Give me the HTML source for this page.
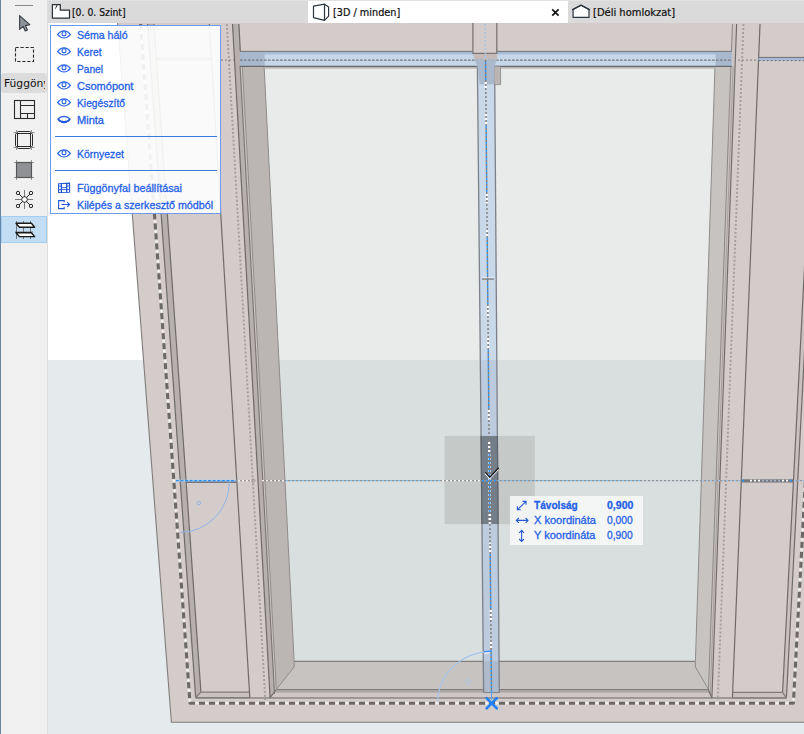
<!DOCTYPE html>
<html lang="hu"><head><meta charset="utf-8"><title>3D / minden</title>
<style>
html,body{margin:0;padding:0;}
body{width:804px;height:734px;overflow:hidden;position:relative;background:#fff;font-family:"Liberation Sans",sans-serif;}
#scene{position:absolute;left:0;top:0;}
#tabbar{position:absolute;left:48px;top:0;width:756px;height:23px;background:#dadada;}
#tabact{position:absolute;left:308px;top:0;width:260px;height:23px;background:#ffffff;}
#tool{position:absolute;left:0;top:0;width:48px;height:734px;background:#f0f0f0;box-sizing:border-box;border-left:1px solid #6787a4;border-right:1px solid #dddddd;}
#tool .lab{position:absolute;left:0.4px;top:73px;width:45.2px;height:20px;background:#dcdcdc;border-radius:3px;overflow:hidden;}
#tool .lab .t{left:2.3px;top:4.1px;font-size:10px;color:#111;transform:scaleX(1.07);-webkit-text-stroke:0;}
#tool .lab .c{position:absolute;left:0;top:0;width:43.9px;height:20px;overflow:hidden;}
#tool .sel{position:absolute;left:0px;top:216px;width:46px;height:27px;background:#c3ddf4;border:1px solid #a5cdf0;box-sizing:border-box;}
.t{position:absolute;white-space:nowrap;line-height:14px;height:14px;transform-origin:0 50%;}
.tb{font-family:"DejaVu Sans","Liberation Sans",sans-serif;-webkit-text-stroke:0.2px #000;}
.pt{-webkit-text-stroke:0.3px #2460e6;}
.ic{position:absolute;overflow:visible;}
#topline{position:absolute;left:1px;top:0;width:803px;height:1px;background:#e1e1e1;}
#pop{position:absolute;left:50px;top:25px;width:171px;height:189px;box-sizing:border-box;border:1px solid #6c9af0;background:rgba(255,255,255,0.905);}
#pop .sep{position:absolute;left:4px;width:162px;height:1px;background:#3b78e0;}
#trk{position:absolute;left:510px;top:496px;width:133px;height:49px;background:rgba(250,251,251,0.82);}
</style></head><body>
<svg id="scene" width="804" height="734" viewBox="0 0 804 734">
<rect x="48" y="23" width="756" height="337" fill="#ffffff"/>
<rect x="48" y="360" width="756" height="374" fill="#e5eaec"/>
<polygon points="117.6,23.0 805.0,23.0 805.0,722.3 171.4,722.3" fill="#d4ccca"/>
<polyline points="117.6,23.0 171.4,722.3 805.0,722.3" fill="none" stroke="#807c7b" stroke-width="1.1"/>
<polygon points="264.1,66.3 715.0,66.3 705.3,360.0 278.9,360.0" fill="#e9ebea"/>
<polygon points="278.9,360.0 705.3,360.0 695.4,661.3 294.1,661.3" fill="#d9dfde"/>
<polygon points="294.1,661.3 695.4,661.3 695.4,667.0 708.5,689.5 276.3,689.5 294.1,667.0" fill="#c7c3c1"/>
<line x1="294.1" y1="661.3" x2="695.4" y2="661.3" stroke="#807c7b" stroke-width="1.25"/>
<rect x="276.3" y="689.5" width="432.2" height="2.2" fill="#b9b4b2"/>
<rect x="272" y="691.7" width="439" height="6" fill="#cfc7c5"/>
<line x1="276.3" y1="689.5" x2="708.5" y2="689.5" stroke="#807c7b" stroke-width="1.25"/>
<line x1="274.5" y1="691.9" x2="710" y2="691.9" stroke="#9a9593" stroke-width="1"/>
<line x1="195.7" y1="697.9" x2="786.4" y2="697.9" stroke="#8d8887" stroke-width="1.5"/>
<polygon points="242.4,66.3 264.1,66.3 294.1,661.3 294.1,667.0 276.3,689.5" fill="#bbb6b4"/>
<polyline points="264.1,66.3 294.1,661.3 294.1,667.0 276.3,689.5" fill="none" stroke="#8f8c8b" stroke-width="1"/>
<polygon points="715.0,66.3 730.9,66.3 708.5,689.5 695.4,667.0 695.4,661.3" fill="#c7c3c1"/>
<polyline points="715.0,66.3 695.4,661.3 695.4,667.0 708.5,689.5" fill="none" stroke="#8f8c8b" stroke-width="1"/>
<polygon points="232.5,24.0 238.9,24.0 240.3,51.4 242.4,66.3 276.3,689.5 270.1,697.6" fill="#b6b0ae"/>
<polygon points="240.1,66.3 242.4,66.3 276.3,689.5 274.5,693.9" fill="#cbc5c3"/>
<line x1="232.49" y1="24.0" x2="270.1" y2="697.6" stroke="#6f6b6a" stroke-width="1.2"/>
<line x1="240.06" y1="66.3" x2="274.5" y2="693.9" stroke="#7a7573" stroke-width="1.1"/>
<line x1="242.36345905334335" y1="66.3" x2="276.3" y2="689.5" stroke="#918d8b" stroke-width="1.0"/>
<line x1="238.9" y1="24" x2="240.3" y2="51.4" stroke="#6f6b6a" stroke-width="1.2"/>
<line x1="270.1" y1="697.6" x2="276.3" y2="689.5" stroke="#6f6b6a" stroke-width="1.2"/>
<polygon points="732.4,24.0 736.6,24.0 711.9,697.8 708.5,690.0" fill="#cbc4c2"/>
<line x1="736.63" y1="24.0" x2="711.9" y2="697.8" stroke="#6f6b6a" stroke-width="1.15"/>
<line x1="733.1" y1="66.3" x2="710.3" y2="693.9" stroke="#9a9694" stroke-width="0.8"/>
<line x1="732.43" y1="24.0" x2="708.5" y2="690.0" stroke="#8a8684" stroke-width="1.0"/>
<line x1="711.9" y1="697.8" x2="708.5" y2="690" stroke="#6f6b6a" stroke-width="1.2"/>
<polygon points="147.6,24.0 154.0,24.0 200.9,692.0 195.7,697.6" fill="#b6b0ae"/>
<polygon points="200.9,692.0 249.3,692.0 249.8,697.6 195.7,697.6" fill="#c9c2c0"/>
<line x1="147.59" y1="24" x2="195.7" y2="697.6" stroke="#6f6b6a" stroke-width="1.2"/>
<line x1="153.97" y1="24" x2="200.9" y2="692.0" stroke="#6f6b6a" stroke-width="1.2"/>
<line x1="209.32" y1="24" x2="249.8" y2="697.6" stroke="#6f6b6a" stroke-width="1.2"/>
<line x1="200.9" y1="692" x2="249.3" y2="692" stroke="#807c7b" stroke-width="1.25"/>
<line x1="195.7" y1="697.6" x2="249.8" y2="697.6" stroke="#807c7b" stroke-width="1.25"/>
<line x1="195.7" y1="697.6" x2="200.9" y2="692" stroke="#807c7b" stroke-width="1.25"/>
<line x1="156.4" y1="59" x2="211.4" y2="59" stroke="#807c7b" stroke-width="2.4"/>
<polygon points="815.2,59.0 819.8,59.0 786.4,697.8 782.6,692.4" fill="#c8c1bf"/>
<polygon points="732.6,692.4 782.6,692.4 786.4,697.8 732.4,697.8" fill="#c9c2c0"/>
<line x1="760.02" y1="24" x2="732.4" y2="697.8" stroke="#6f6b6a" stroke-width="1.2"/>
<line x1="815.19" y1="59" x2="782.6" y2="692.4" stroke="#6f6b6a" stroke-width="1.2"/>
<line x1="819.81" y1="59" x2="786.4" y2="697.8" stroke="#6f6b6a" stroke-width="1.2"/>
<line x1="732.6" y1="692.4" x2="782.6" y2="692.4" stroke="#807c7b" stroke-width="1.25"/>
<line x1="732.4" y1="697.8" x2="786.4" y2="697.8" stroke="#807c7b" stroke-width="1.25"/>
<line x1="786.4" y1="697.8" x2="782.6" y2="692.4" stroke="#807c7b" stroke-width="1.25"/>
<rect x="758.6" y="57.4" width="46" height="3.2" fill="#a9bcd5"/>
<line x1="758.6" y1="57.4" x2="805" y2="57.4" stroke="#6f7079" stroke-width="1"/>
<line x1="758.6" y1="60.6" x2="805" y2="60.6" stroke="#6f7079" stroke-width="1" stroke-dasharray="2 2"/>
<line x1="186" y1="481.9" x2="236.4" y2="481.9" stroke="#5b5b60" stroke-width="1.5"/>
<rect x="741.5" y="479.3" width="52.2" height="3.2" fill="#77777b"/>
<rect x="240" y="51.4" width="491.8" height="14.9" fill="#c6d7ea"/>
<rect x="240" y="51.4" width="491.8" height="3" fill="#a9bbd3"/>
<rect x="240" y="51.4" width="24.6" height="14.9" fill="#a9b9cd"/>
<rect x="715.6" y="51.4" width="16.2" height="14.9" fill="#a9b9cd"/>
<rect x="264.6" y="66.3" width="451" height="2.4" fill="#b9b9b6"/>
<line x1="240" y1="51.4" x2="731.8" y2="51.4" stroke="#70717a" stroke-width="1"/>
<line x1="240" y1="66.3" x2="731.8" y2="66.3" stroke="#68696f" stroke-width="1.2"/>
<line x1="240" y1="60.1" x2="731.8" y2="60.1" stroke="#77777a" stroke-width="1.25" stroke-dasharray="2.6 1.4"/>
<line x1="221" y1="60.1" x2="234" y2="60.1" stroke="#8f8a88" stroke-width="1.4" stroke-dasharray="2 2"/>
<line x1="738" y1="60.1" x2="757" y2="60.1" stroke="#8f8a88" stroke-width="1.4" stroke-dasharray="2 2"/>
<line x1="226.85" y1="24.0" x2="265.3" y2="700" stroke="#a39e9c" stroke-width="1.9" stroke-dasharray="2 2"/>
<line x1="743.45" y1="24.0" x2="717.8" y2="700" stroke="#a39e9c" stroke-width="1.9" stroke-dasharray="2 2"/>
<polygon points="477.4,66.3 494.6,66.3 496.8,360.0 480.3,360.0" fill="#c9d9ea"/>
<polygon points="480.3,360.0 496.8,360.0 499.3,692.6 483.6,692.6" fill="#bccbdd"/>
<polygon points="483.3,661.3 499.1,661.3 499.3,692.6 483.6,692.6" fill="#adbbcc"/>
<line x1="477.4" y1="66.3" x2="483.6" y2="692.6" stroke="#7c8088" stroke-width="1.3"/>
<line x1="494.6" y1="66.3" x2="499.3" y2="692.6" stroke="#7c8088" stroke-width="1.3"/>
<line x1="483.6" y1="692.6" x2="499.3" y2="692.6" stroke="#7c8088" stroke-width="1"/>
<rect x="472.9" y="23" width="23.9" height="30.3" fill="#d4ccca"/>
<polygon points="472.9,53.3 496.8,53.3 497.0,59.5 474.5,59.5" fill="#c4bbb9"/>
<polygon points="474.5,59.5 497.0,59.5 494.6,66.3 494.3,84.2 479.6,84.2 477.4,66.3" fill="#a9b8cb"/>
<polygon points="494.6,66.3 500.5,66.3 500.6,84.6 494.4,84.6" fill="#bab5b3"/>
<polyline points="494.6,66.3 500.5,66.3 500.6,84.6 494.4,84.6" fill="none" stroke="#8a8685" stroke-width="0.8"/>
<polyline points="472.9,23.0 472.9,53.3 496.8,53.3 496.8,23.0" fill="none" stroke="#7a7675" stroke-width="1.3"/>
<rect x="444.6" y="435.9" width="90.2" height="88.2" fill="#7f7f7f" fill-opacity="0.22"/>
<polygon points="481.1,435.9 497.4,435.9 498.0,524.1 481.9,524.1" fill="#747e89"/>
<line x1="481.05882165096597" y1="435.9" x2="481.9319495449465" y2="524.1" stroke="#5d636b" stroke-width="1.2"/>
<line x1="497.373622864442" y1="435.9" x2="498.0355101389111" y2="524.1" stroke="#5d636b" stroke-width="1.2"/>
<line x1="175.8" y1="480.6" x2="236.4" y2="480.6" stroke="#a9cdf4" stroke-width="1.6"/>
<line x1="175.8" y1="480.6" x2="236.4" y2="480.6" stroke="#2a90f6" stroke-width="1.1" stroke-dasharray="3 1.6"/>
<line x1="236" y1="480.7" x2="252" y2="480.7" stroke="#f4f2f1" stroke-width="1.2" stroke-opacity="1" stroke-dasharray="2 2" stroke-dashoffset="2"/>
<line x1="262" y1="480.7" x2="286" y2="480.7" stroke="#f4f2f1" stroke-width="1.2" stroke-opacity="1" stroke-dasharray="2 2" stroke-dashoffset="0"/>
<line x1="286" y1="480.7" x2="440" y2="480.7" stroke="#86bbf2" stroke-width="1.2" stroke-opacity="1" stroke-dasharray="2 2" stroke-dashoffset="0"/>
<line x1="440" y1="480.7" x2="482" y2="480.7" stroke="#f8f8f8" stroke-width="1.2" stroke-opacity="1" stroke-dasharray="2 2" stroke-dashoffset="2"/>
<line x1="482" y1="480.7" x2="498" y2="480.7" stroke="#2f96ff" stroke-width="1.2" stroke-opacity="1" stroke-dasharray="2 2" stroke-dashoffset="0"/>
<line x1="498" y1="480.7" x2="640" y2="480.7" stroke="#86bbf2" stroke-width="1.2" stroke-opacity="1" stroke-dasharray="2 2" stroke-dashoffset="0"/>
<line x1="640" y1="480.7" x2="700" y2="480.7" stroke="#c6d4e2" stroke-width="1.2" stroke-opacity="1" stroke-dasharray="2 2" stroke-dashoffset="2"/>
<line x1="700" y1="480.7" x2="741" y2="480.7" stroke="#9cc0ea" stroke-width="1.2" stroke-opacity="1" stroke-dasharray="2 2" stroke-dashoffset="2"/>
<line x1="794" y1="480.7" x2="804" y2="480.7" stroke="#9cc0ea" stroke-width="1.2" stroke-opacity="1" stroke-dasharray="2 2" stroke-dashoffset="0"/>
<line x1="236" y1="480.7" x2="252" y2="480.7" stroke="#9a9593" stroke-width="1.2" stroke-opacity="1" stroke-dasharray="2 2" stroke-dashoffset="0"/>
<line x1="262" y1="480.7" x2="286" y2="480.7" stroke="#8f8d8c" stroke-width="1.2" stroke-opacity="1" stroke-dasharray="2 2" stroke-dashoffset="2"/>
<line x1="286" y1="480.7" x2="700" y2="480.7" stroke="#939291" stroke-width="1.2" stroke-opacity="1" stroke-dasharray="2 2" stroke-dashoffset="2"/>
<line x1="700" y1="480.7" x2="741" y2="480.7" stroke="#9a9593" stroke-width="1.2" stroke-opacity="1" stroke-dasharray="2 2" stroke-dashoffset="0"/>
<line x1="794" y1="480.7" x2="804" y2="480.7" stroke="#9a9593" stroke-width="1.2" stroke-opacity="1" stroke-dasharray="2 2" stroke-dashoffset="2"/>
<circle cx="253.2" cy="480.7" r="1.7" fill="none" stroke="#9a9593" stroke-width="0.9"/>
<line x1="741.6" y1="480.7" x2="746" y2="480.7" stroke="#2f96ff" stroke-width="1.7" stroke-dasharray="2 2" stroke-dashoffset="3.6000000000000227"/>
<line x1="748" y1="480.7" x2="760" y2="480.7" stroke="#ffffff" stroke-width="1.7" stroke-dasharray="2 2" stroke-dashoffset="2"/>
<line x1="760" y1="480.7" x2="780" y2="480.7" stroke="#9db4cc" stroke-width="1.7" stroke-dasharray="2 2" stroke-dashoffset="2"/>
<line x1="780" y1="480.7" x2="788" y2="480.7" stroke="#ffffff" stroke-width="1.7" stroke-dasharray="2 2" stroke-dashoffset="2"/>
<line x1="788" y1="480.7" x2="793.6" y2="480.7" stroke="#2f96ff" stroke-width="1.7" stroke-dasharray="2 2" stroke-dashoffset="2"/>
<line x1="485.18" y1="24" x2="485.51083038869257" y2="59" stroke="#a9c4e4" stroke-width="1.4" stroke-dasharray="2 2"/>
<line x1="489.23" y1="452" x2="489.91" y2="524" stroke="#e4eaf0" stroke-width="2.6" stroke-dasharray="2 2" stroke-dashoffset="2"/>
<line x1="485.52" y1="60" x2="485.73" y2="82" stroke="#2f96ff" stroke-width="1.4" stroke-dasharray="2 2" stroke-dashoffset="2"/>
<line x1="486.13" y1="124" x2="486.78" y2="193" stroke="#2f96ff" stroke-width="1.4" stroke-dasharray="2 2" stroke-dashoffset="2"/>
<line x1="487.19" y1="237" x2="487.84" y2="305" stroke="#2f96ff" stroke-width="1.4" stroke-dasharray="2 2" stroke-dashoffset="3"/>
<line x1="488.25" y1="349" x2="488.83" y2="410" stroke="#2f96ff" stroke-width="1.4" stroke-dasharray="2 2" stroke-dashoffset="3"/>
<line x1="489.23" y1="452" x2="489.79" y2="512" stroke="#2f96ff" stroke-width="1.4" stroke-dasharray="2 2" stroke-dashoffset="2"/>
<line x1="490.17" y1="552" x2="490.72" y2="610" stroke="#2f96ff" stroke-width="1.4" stroke-dasharray="2 2" stroke-dashoffset="2"/>
<line x1="491.09" y1="649" x2="491.49" y2="692" stroke="#2f96ff" stroke-width="1.4" stroke-dasharray="2 2" stroke-dashoffset="3"/>
<line x1="485.73" y1="82" x2="485.80" y2="90" stroke="#ffffff" stroke-width="2.3" stroke-dasharray="2 2" stroke-dashoffset="0"/>
<line x1="486.02" y1="113" x2="486.13" y2="124" stroke="#ffffff" stroke-width="2.3" stroke-dasharray="2 2" stroke-dashoffset="3"/>
<line x1="486.78" y1="193" x2="486.87" y2="203" stroke="#ffffff" stroke-width="2.3" stroke-dasharray="2 2" stroke-dashoffset="3"/>
<line x1="487.11" y1="228" x2="487.19" y2="237" stroke="#ffffff" stroke-width="2.3" stroke-dasharray="2 2" stroke-dashoffset="2"/>
<line x1="487.84" y1="305" x2="487.95" y2="317" stroke="#ffffff" stroke-width="2.3" stroke-dasharray="2 2" stroke-dashoffset="3"/>
<line x1="488.13" y1="336" x2="488.25" y2="349" stroke="#ffffff" stroke-width="2.3" stroke-dasharray="2 2" stroke-dashoffset="2"/>
<line x1="488.83" y1="410" x2="488.92" y2="420" stroke="#ffffff" stroke-width="2.3" stroke-dasharray="2 2" stroke-dashoffset="0"/>
<line x1="489.11" y1="440" x2="489.23" y2="452" stroke="#ffffff" stroke-width="2.3" stroke-dasharray="2 2" stroke-dashoffset="2"/>
<line x1="489.79" y1="512" x2="489.88" y2="521" stroke="#ffffff" stroke-width="2.3" stroke-dasharray="2 2" stroke-dashoffset="2"/>
<line x1="490.09" y1="543" x2="490.17" y2="552" stroke="#ffffff" stroke-width="2.3" stroke-dasharray="2 2" stroke-dashoffset="1"/>
<line x1="490.72" y1="610" x2="490.81" y2="620" stroke="#ffffff" stroke-width="2.3" stroke-dasharray="2 2" stroke-dashoffset="0"/>
<line x1="491.00" y1="640" x2="491.09" y2="649" stroke="#ffffff" stroke-width="2.3" stroke-dasharray="2 2" stroke-dashoffset="2"/>
<line x1="485.52" y1="60" x2="491.49" y2="692" stroke="#85817f" stroke-width="1.5" stroke-dasharray="2 2" stroke-dashoffset="0"/>
<line x1="491.49" y1="692" x2="491.57" y2="700" stroke="#5aa6f5" stroke-width="1"/>
<line x1="482" y1="278" x2="494" y2="278" stroke="#ffffff" stroke-width="1"/>
<line x1="482" y1="279" x2="494" y2="279" stroke="#6f6f6f" stroke-width="1.2"/>
<polyline points="140.6,24.0 190.0,703.2 793.4,703.2 830.0,24.0" fill="none" stroke="#e0dcdb" stroke-width="3" stroke-linejoin="round"/>
<polyline points="140.6,24.0 190.0,703.2 793.4,703.2 830.0,24.0" fill="none" stroke="#ffffff" stroke-width="1.8" stroke-dasharray="1.4 8.6" stroke-dashoffset="-7.3" stroke-linejoin="round"/>
<polyline points="140.6,24.0 190.0,703.2 793.4,703.2 830.0,24.0" fill="none" stroke="#6b6867" stroke-width="3.1" stroke-dasharray="6 4" stroke-linejoin="round"/>
<path d="M229.3 482 A50 50 0 0 1 180.5 532.5" fill="none" stroke="#8db6ea" stroke-width="1"/>
<circle cx="198.8" cy="503" r="1.8" fill="none" stroke="#8db6ea" stroke-width="0.9"/>
<path d="M437.8 701.5 A53.5 50.5 0 0 1 490.8 651.6" fill="none" stroke="#a3c6ef" stroke-width="1.1"/>
<line x1="484" y1="651.8" x2="491" y2="651.3" stroke="#3a8ff5" stroke-width="1.4"/>
<line x1="484" y1="653.2" x2="490" y2="652.8" stroke="#ffffff" stroke-width="1"/>
<path d="M468.5 678.6 L471.3 681.4 L468.5 684.2 L465.7 681.4 Z" fill="none" stroke="#a3c6ef" stroke-width="0.9"/>
<path d="M486.6 698.2 L496.8 708.4 M496.8 698.2 L486.6 708.4" stroke="#1e82ff" stroke-width="2.6" stroke-linecap="round" fill="none"/>
<path d="M485.0 473.4 L489.6 478.4 L498.4 469.2" stroke="#ffffff" stroke-width="1.4" fill="none"/>
<path d="M485.4 472.4 L489.8 477.2 L498.8 467.8" stroke="#1a1a1a" stroke-width="1.4" fill="none"/>
</svg>
<div id="tabbar"></div><div id="tabact"></div>
<svg class="ic" style="left:51px;top:3px" width="20" height="16" viewBox="0 0 20 16"><path d="M1.4 1.7 H9.3 V7.2 H18.5 V15 H1.4 Z" fill="#fff" stroke="#2b3036" stroke-width="1.25" stroke-linejoin="round"/><path d="M4.4 5.6 L6.2 2" stroke="#2b3036" stroke-width="1"/></svg>
<div class="t tb" style="left:72.4px;top:5.5px;font-size:10px;color:#151515;transform:scaleX(0.9257);">[0. 0. Szint]</div>
<svg class="ic" style="left:312px;top:3px" width="18" height="18" viewBox="0 0 18 18"><path d="M1.5 3.2 L12.5 1.2 L16.6 4 L16.6 13.2 L12.5 17.3 L1.5 14.6 Z" fill="#fff" stroke="#2b3640" stroke-width="1.2" stroke-linejoin="round"/><path d="M12.5 1.2 V17.3" stroke="#2b3640" stroke-width="1.2"/></svg>
<div class="t tb" style="left:332.6px;top:5.5px;font-size:10px;color:#151515;transform:scaleX(0.9697);">[3D / minden]</div>
<svg class="ic" style="left:549px;top:7px" width="11" height="11" viewBox="0 0 11 11"><path d="M3.2 2.3 L9.6 8.7 M9.6 2.3 L3.2 8.7" stroke="#151515" stroke-width="1.7"/></svg>
<svg class="ic" style="left:571px;top:4px" width="20" height="15" viewBox="0 0 20 15"><path d="M2.1 13.4 V5.4 L10 1.2 L18 5.4 V13.4 Z" fill="#fff" stroke="#2b3640" stroke-width="1.2" stroke-linejoin="miter"/><path d="M1.2 5.9 L10 1.2 L18.9 5.9" fill="none" stroke="#2b3640" stroke-width="1.2"/></svg>
<div class="t tb" style="left:592.5px;top:5.5px;font-size:10px;color:#151515;transform:scaleX(0.9939);">[Déli homlokzat]</div>
<div id="topline"></div>
<div id="tool"><div class="lab"><div class="c"><div class="t tb">Függöny</div></div></div><div class="sel"></div></div>
<svg class="ic" style="left:0;top:0" width="48" height="250" viewBox="0 0 48 250">
<line x1="15" y1="5.5" x2="33" y2="5.5" stroke="#8a8a8a" stroke-width="1"/>
<path d="M19.6 15.6 L19.6 29.4 L23.2 26.4 L25.2 31 L27.4 30 L25.4 25.6 L29.8 24.6 Z" fill="#8d9297" stroke="#3a3f45" stroke-width="1.1" stroke-linejoin="round"/>
<rect x="15.5" y="47.5" width="18" height="14" fill="none" stroke="#2a2a2a" stroke-width="1.1" stroke-dasharray="3.2 1.8"/>
<g fill="none" stroke="#2a2a2a" stroke-width="1.1"><rect x="14.5" y="100.5" width="20" height="18"/><path d="M20.5 100.5 V118.5 M20.5 105.5 H34.5 M20.5 113.5 H34.5 M27.5 113.5 V118.5"/></g>
<g fill="none" stroke="#2a2a2a" stroke-width="1"><rect x="17.5" y="131.5" width="13" height="17" rx="0.8"/><rect x="15.5" y="133.5" width="17" height="13" rx="0.8"/></g>
<path d="M13.6 132.5 H16.4 M31.6 132.5 H34.6 M13.6 147.5 H16.4 M31.6 147.5 H34.6 M16.5 130 V132.4 M31.5 130 V132.4 M16.5 147.6 V150 M31.5 147.6 V150" stroke="#6a6a6a" stroke-width="0.7"/>
<rect x="16.5" y="162.5" width="15" height="15" fill="#8f9194" stroke="#2a2a2a" stroke-width="1.1"/>
<path d="M14 162.5 H34 M14 177.5 H34 M16.5 160 V180 M31.5 160 V180" stroke="#6a6a6a" stroke-width="0.7"/>
<path d="M24.5 190 V209 M15 199.5 H33" stroke="#5a5a5a" stroke-width="0.8"/>
<path d="M18.6 193.6 L30.4 205.4 M30.4 193.6 L18.6 205.4" stroke="#2a2a2a" stroke-width="1"/>
<circle cx="24.5" cy="199.5" r="2.8" fill="#fff" stroke="#2a2a2a" stroke-width="1"/>
<g fill="#f0f0f0" stroke="#2a2a2a" stroke-width="1"><circle cx="18" cy="193" r="1.7"/><circle cx="31" cy="193" r="1.7"/><circle cx="18" cy="206" r="1.7"/><circle cx="31" cy="206" r="1.7"/></g>
<path d="M16.5 221 V239 M23.5 221 V239 M30.5 221 V239 M15 232 H33" stroke="#5a5a5a" stroke-width="0.8"/>
<path d="M16 223.3 H31.4 L34.6 227.2 H19.4 Z M16 232.7 H31.4 L34.6 236.6 H19.4 Z" fill="#fff" stroke="#1a1a1a" stroke-width="1.4" stroke-linejoin="round"/>
</svg>
<div id="pop"><div class="sep" style="top:110px"></div><div class="sep" style="top:144px"></div></div>
<div class="t pt" style="left:76.5px;top:28px;font-size:11px;color:#2460e6;transform:scaleX(0.9620);">Séma háló</div>
<svg class="ic" style="left:57px;top:30.4px" width="14" height="9" viewBox="0 0 14 9"><path d="M0.6 4.4 C3 1.3 5 0.8 7 0.8 C9 0.8 11 1.3 13.4 4.4 C11 7.5 9 8 7 8 C5 8 3 7.5 0.6 4.4 Z" fill="none" stroke="#2a66e8" stroke-width="1.15"/><circle cx="7" cy="3.7" r="2" fill="none" stroke="#2a66e8" stroke-width="1.1"/></svg>
<div class="t pt" style="left:76.5px;top:45px;font-size:11px;color:#2460e6;transform:scaleX(0.9316);">Keret</div>
<svg class="ic" style="left:57px;top:47.4px" width="14" height="9" viewBox="0 0 14 9"><path d="M0.6 4.4 C3 1.3 5 0.8 7 0.8 C9 0.8 11 1.3 13.4 4.4 C11 7.5 9 8 7 8 C5 8 3 7.5 0.6 4.4 Z" fill="none" stroke="#2a66e8" stroke-width="1.15"/><circle cx="7" cy="3.7" r="2" fill="none" stroke="#2a66e8" stroke-width="1.1"/></svg>
<div class="t pt" style="left:76.5px;top:62px;font-size:11px;color:#2460e6;transform:scaleX(0.9253);">Panel</div>
<svg class="ic" style="left:57px;top:64.4px" width="14" height="9" viewBox="0 0 14 9"><path d="M0.6 4.4 C3 1.3 5 0.8 7 0.8 C9 0.8 11 1.3 13.4 4.4 C11 7.5 9 8 7 8 C5 8 3 7.5 0.6 4.4 Z" fill="none" stroke="#2a66e8" stroke-width="1.15"/><circle cx="7" cy="3.7" r="2" fill="none" stroke="#2a66e8" stroke-width="1.1"/></svg>
<div class="t pt" style="left:76.5px;top:79px;font-size:11px;color:#2460e6;transform:scaleX(1.0018);">Csomópont</div>
<svg class="ic" style="left:57px;top:81.4px" width="14" height="9" viewBox="0 0 14 9"><path d="M0.6 4.4 C3 1.3 5 0.8 7 0.8 C9 0.8 11 1.3 13.4 4.4 C11 7.5 9 8 7 8 C5 8 3 7.5 0.6 4.4 Z" fill="none" stroke="#2a66e8" stroke-width="1.15"/><circle cx="7" cy="3.7" r="2" fill="none" stroke="#2a66e8" stroke-width="1.1"/></svg>
<div class="t pt" style="left:76.5px;top:96px;font-size:11px;color:#2460e6;transform:scaleX(0.9339);">Kiegészítő</div>
<svg class="ic" style="left:57px;top:98.4px" width="14" height="9" viewBox="0 0 14 9"><path d="M0.6 4.4 C3 1.3 5 0.8 7 0.8 C9 0.8 11 1.3 13.4 4.4 C11 7.5 9 8 7 8 C5 8 3 7.5 0.6 4.4 Z" fill="none" stroke="#2a66e8" stroke-width="1.15"/><circle cx="7" cy="3.7" r="2" fill="none" stroke="#2a66e8" stroke-width="1.1"/></svg>
<div class="t pt" style="left:76.5px;top:113px;font-size:11px;color:#2460e6;transform:scaleX(1.0037);">Minta</div>
<svg class="ic" style="left:57px;top:115.4px" width="14" height="9" viewBox="0 0 14 9"><path d="M0.8 4.2 C3 1.8 5 1.3 7 1.3 C9 1.3 11 1.8 13.2 4.2 C11 7 9 7.6 7 7.6 C5 7.6 3 7 0.8 4.2 Z" fill="none" stroke="#2058d8" stroke-width="1.2"/><path d="M1.4 4.6 C4 7.4 10 7.4 12.6 4.6" fill="none" stroke="#2058d8" stroke-width="1.6"/></svg>
<div class="t pt" style="left:76.5px;top:147px;font-size:11px;color:#2460e6;transform:scaleX(0.9495);">Környezet</div>
<svg class="ic" style="left:57px;top:149.4px" width="14" height="9" viewBox="0 0 14 9"><path d="M0.6 4.4 C3 1.3 5 0.8 7 0.8 C9 0.8 11 1.3 13.4 4.4 C11 7.5 9 8 7 8 C5 8 3 7.5 0.6 4.4 Z" fill="none" stroke="#2a66e8" stroke-width="1.15"/><circle cx="7" cy="3.7" r="2" fill="none" stroke="#2a66e8" stroke-width="1.1"/></svg>
<div class="t pt" style="left:76.5px;top:181px;font-size:11px;color:#2460e6;transform:scaleX(0.9813);">Függönyfal beállításai</div>
<div class="t pt" style="left:76.5px;top:198px;font-size:11px;color:#2460e6;transform:scaleX(0.9714);">Kilépés a szerkesztő módból</div>
<svg class="ic" style="left:57px;top:182px" width="14" height="12" viewBox="0 0 14 12"><g fill="none" stroke="#2458d6"><path d="M1.6 1.7 L12.6 1.2 V10.3 L1.6 10.5 Z" stroke-width="1.1"/><path d="M4.4 1.6 V10.4 M9.7 1.3 V10.3" stroke-width="1.3"/><path d="M1.6 4.2 H4.4 M9.7 4 H12.6 M1.6 7.6 H12.6 M4.4 5.6 H9.7" stroke-width="0.9"/></g></svg>
<svg class="ic" style="left:57px;top:199px" width="14" height="12" viewBox="0 0 14 12"><g fill="none" stroke="#2458d6" stroke-width="1.1"><path d="M7.2 3.3 V1.6 H1.6 V9.6 H7.2 V7.9"/><path d="M4.4 5.5 H12.6 M10.2 3.1 L12.6 5.5 L10.2 7.9"/></g></svg>
<div id="trk"></div>
<div class="t pt" style="left:534.2px;top:498px;font-size:11px;font-weight:bold;color:#2460e6;transform:scaleX(0.9182);">Távolság</div>
<div class="t pt" style="left:606.6px;top:498px;font-size:11px;font-weight:bold;color:#2460e6;transform:scaleX(0.9600);">0,900</div>
<div class="t pt" style="left:534.2px;top:513px;font-size:11px;color:#2460e6;transform:scaleX(1.0032);">X koordináta</div>
<div class="t pt" style="left:606.6px;top:513px;font-size:11px;color:#2460e6;transform:scaleX(0.9309);">0,000</div>
<div class="t pt" style="left:534.2px;top:528px;font-size:11px;color:#2460e6;transform:scaleX(0.9984);">Y koordináta</div>
<div class="t pt" style="left:606.6px;top:528px;font-size:11px;color:#2460e6;transform:scaleX(0.9309);">0,900</div>
<svg class="ic" style="left:514px;top:498px" width="16" height="46" viewBox="0 0 16 46"><g fill="none" stroke="#2458d6" stroke-width="1.1"><path d="M3.6 11.6 L11.8 3.6 M8.6 3.4 H12 V6.8 M3.4 8.2 V11.8 H6.8"/><path d="M2.4 22.4 H14 M4.8 20 L2.4 22.4 L4.8 24.8 M11.6 20 L14 22.4 L11.6 24.8"/><path d="M7.6 32.4 V43.4 M5.2 34.8 L7.6 32.4 L10 34.8 M5.2 41 L7.6 43.4 L10 41"/></g></svg>
</body></html>
